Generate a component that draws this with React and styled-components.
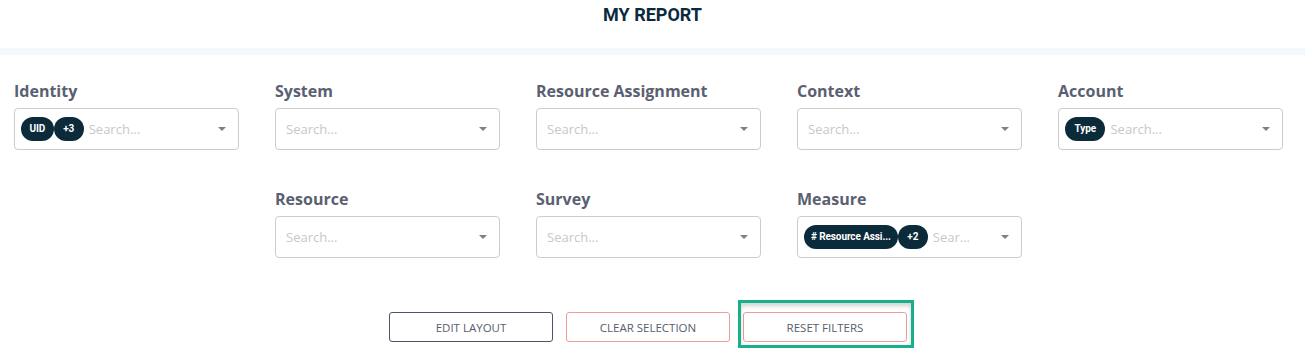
import React from "react";
import styled, { createGlobalStyle } from "styled-components";

const GlobalStyle = createGlobalStyle`
  body {
    margin: 0;
    background: #ffffff;
    font-family: "Open Sans", "Liberation Sans", sans-serif;
  }
`;

const Page = styled.div`
  width: 1305px;
  height: 349px;
  overflow: hidden;
`;

const Header = styled.header`
  height: 55px;
  box-sizing: border-box;
  padding-top: 3px;
  text-align: center;
  border-bottom: 7px solid #f3f8fd;
`;

const Title = styled.h1`
  margin: 0;
  font-family: Roboto, "Liberation Sans", sans-serif;
  font-size: 18px;
  line-height: 24px;
  font-weight: 700;
  color: #0c2a3d;
`;

const FilterGrid = styled.div`
  display: grid;
  grid-template-columns: repeat(5, 225px);
  column-gap: 36px;
  row-gap: 38px;
  padding: 25px 14px 0;
`;

const Field = styled.div`
  grid-column: ${({ $col }) => $col || "auto"};
`;

const Label = styled.div`
  font-size: 16px;
  line-height: 22px;
  font-weight: 700;
  color: #5a6072;
  margin-bottom: 6px;
`;

const Select = styled.div`
  height: 42px;
  box-sizing: border-box;
  border: 1px solid #cccccc;
  border-radius: 4px;
  display: flex;
  align-items: center;
  padding: 0 12px 0 6px;
`;

const Chips = styled.div`
  display: flex;
  align-items: center;
  flex-shrink: 0;
  margin-right: 5px;
`;

const Chip = styled.span`
  height: 24px;
  min-width: ${({ $round }) => ($round ? "30px" : "0")};
  box-sizing: border-box;
  border-radius: 12px;
  background: #0b2a3a;
  color: #ffffff;
  font-family: Roboto, "Liberation Sans", sans-serif;
  font-size: 10px;
  font-weight: 700;
  letter-spacing: -0.1px;
  line-height: 24px;
  text-align: center;
  padding: 0 ${({ $pad }) => $pad || 7}px;
  white-space: nowrap;
`;

const Placeholder = styled.span`
  flex: 1;
  min-width: 0;
  padding-left: ${({ $indent }) => $indent}px;
  font-size: 13px;
  color: #c6c8cd;
  white-space: nowrap;
`;

const Caret = styled.span`
  width: 0;
  height: 0;
  border-left: 4px solid transparent;
  border-right: 4px solid transparent;
  border-top: 4px solid #7b7f88;
  margin-left: 4px;
  flex-shrink: 0;
`;

const Actions = styled.div`
  display: flex;
  justify-content: center;
  gap: 13px;
  margin-top: 54px;
  padding-right: 9px;
`;

const ActionButton = styled.button`
  width: 164px;
  height: 30px;
  box-sizing: border-box;
  background: #ffffff;
  border: 1px solid ${({ $tone }) => ($tone === "danger" ? "#eb9c9c" : "#4d5465")};
  border-radius: 3px;
  font-family: "Open Sans", "Liberation Sans", sans-serif;
  font-size: 11.5px;
  color: #575d6b;
  text-transform: uppercase;
  cursor: pointer;
`;

const Focused = styled.span`
  position: relative;
  display: inline-flex;

  &::after {
    content: "";
    position: absolute;
    top: -12px;
    left: -5px;
    right: -7px;
    bottom: -6px;
    border: 3px solid #16b08b;
    box-shadow: inset 0 3px 4px rgba(0, 0, 0, 0.18);
    pointer-events: none;
  }
`;

const filters = [
  {
    label: "Identity",
    chips: [
      { text: "UID", pad: 8.5 },
      { text: "+3", round: true, pad: 6 },
    ],
  },
  { label: "System" },
  { label: "Resource Assignment" },
  { label: "Context" },
  { label: "Account", chips: [{ text: "Type", pad: 9.5 }] },
  { label: "Resource", col: 2 },
  { label: "Survey" },
  {
    label: "Measure",
    chips: [
      { text: "# Resource Assi...", pad: 7 },
      { text: "+2", round: true, pad: 6 },
    ],
    placeholder: "Sear...",
  },
];

const FilterSelect = ({ chips, placeholder = "Search..." }) => (
  <Select>
    {chips && (
      <Chips>
        {chips.map((c) => (
          <Chip key={c.text} $pad={c.pad} $round={c.round}>
            {c.text}
          </Chip>
        ))}
      </Chips>
    )}
    <Placeholder $indent={chips ? 0 : 4}>{placeholder}</Placeholder>
    <Caret />
  </Select>
);

export default function App() {
  return (
    <Page>
      <GlobalStyle />
      <Header>
        <Title>MY REPORT</Title>
      </Header>

      <FilterGrid>
        {filters.map((f) => (
          <Field key={f.label} $col={f.col}>
            <Label>{f.label}</Label>
            <FilterSelect chips={f.chips} placeholder={f.placeholder} />
          </Field>
        ))}
      </FilterGrid>

      <Actions>
        <ActionButton>Edit layout</ActionButton>
        <ActionButton $tone="danger">Clear selection</ActionButton>
        <Focused>
          <ActionButton $tone="danger">Reset filters</ActionButton>
        </Focused>
      </Actions>
    </Page>
  );
}
